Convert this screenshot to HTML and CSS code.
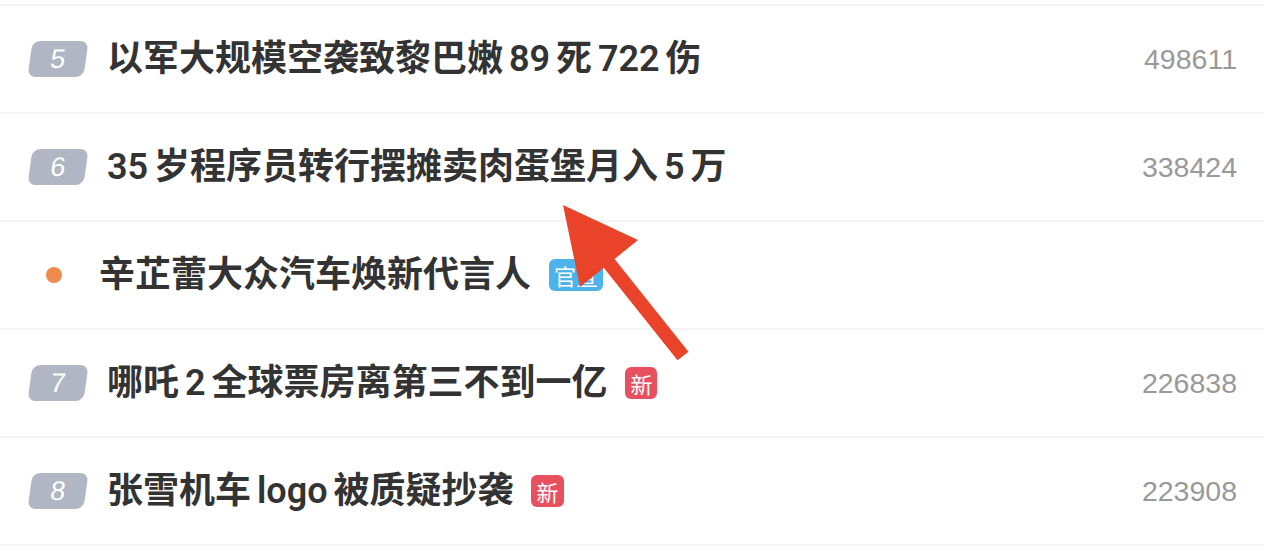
FILE: index.html
```html
<!DOCTYPE html>
<html lang="zh-CN">
<head>
  <meta charset="UTF-8" />
  <meta name="viewport" content="width=device-width, initial-scale=1.0"/>
  <title>热搜榜</title>
  <link rel="stylesheet" href="styles.css">
</head>
<body>
  <ul class="hot-list">
    <li class="hot-item">
      <span class="rank"><span class="rank-num">5</span></span>
      <span class="title">以军大规模空袭致黎巴嫩 89 死 722 伤</span>
      <span class="count">498611</span>
    </li>
    <li class="hot-item">
      <span class="rank"><span class="rank-num">6</span></span>
      <span class="title">35 岁程序员转行摆摊卖肉蛋堡月入 5 万</span>
      <span class="count">338424</span>
    </li>
    <li class="hot-item promo">
      <span class="dot"></span>
      <span class="title">辛芷蕾大众汽车焕新代言人</span>
      <span class="tag tag-official">官宣</span>
    </li>
    <li class="hot-item">
      <span class="rank"><span class="rank-num">7</span></span>
      <span class="title">哪吒 2 全球票房离第三不到一亿</span>
      <span class="tag tag-new">新</span>
      <span class="count">226838</span>
    </li>
    <li class="hot-item">
      <span class="rank"><span class="rank-num">8</span></span>
      <span class="title">张雪机车 logo 被质疑抄袭</span>
      <span class="tag tag-new">新</span>
      <span class="count">223908</span>
    </li>
  </ul>

  <!-- annotation arrow drawn over the list -->
  <svg class="arrow" width="1264" height="552" viewBox="0 0 1264 552">
    <line x1="604" y1="257" x2="683" y2="356" stroke="#e9432a" stroke-width="14" />
    <polygon points="563,205 638,240 580,287" fill="#e9432a" />
  </svg>
</body>
</html>
```

FILE: styles.css
```css
:root {
  --text-color: #333333;
  --count-color: #999999;
  --line-color: #f4f4f4;
  --rank-color: #b1b6c4;
  --new-color: #e9505f;
  --official-color: #4db3ea;
  --dot-color: #f08b4e;
}

body {
  margin: 0;
  padding-top: 4px;
  background: #ffffff;
  font-family: "Noto Sans CJK SC", "Noto Sans", sans-serif;
  color: var(--text-color);
  overflow: hidden;
}

.hot-list {
  list-style: none;
  margin: 0;
  padding: 0;
}

.hot-item {
  display: flex;
  align-items: center;
  height: 106px;
  border-top: 2px solid var(--line-color);
  padding-right: 27px;
}

.hot-item:last-child {
  border-bottom: 2px solid var(--line-color);
}

.rank {
  flex: none;
  display: flex;
  align-items: center;
  justify-content: center;
  width: 56px;
  height: 36px;
  margin-left: 30px;
  margin-right: 21px;
  background: var(--rank-color);
  border-radius: 8px;
  transform: skewX(-8deg);
}

.rank-num {
  color: #ffffff;
  font-family: "Liberation Sans", Arial, sans-serif;
  font-size: 27px;
  line-height: 1;
}

.dot {
  flex: none;
  width: 16px;
  height: 16px;
  margin-left: 46px;
  margin-right: 37px;
  border-radius: 50%;
  background: var(--dot-color);
}

.title {
  font-family: Roboto, "Noto Sans CJK SC", sans-serif;
  font-size: 36px;
  font-weight: 600;
  line-height: 1;
  word-spacing: -3px;
  white-space: nowrap;
}

.tag {
  flex: none;
  height: 32px;
  line-height: 32px;
  padding: 0 5px;
  margin-left: 18px;
  border-radius: 6px;
  color: #ffffff;
  font-size: 22px;
}

.tag-new {
  background: var(--new-color);
}

.tag-official {
  background: var(--official-color);
}

.count {
  margin-left: auto;
  color: var(--count-color);
  font-family: "Liberation Sans", Arial, sans-serif;
  font-size: 28.5px;
}

.arrow {
  position: absolute;
  left: 0;
  top: 0;
  pointer-events: none;
}
```
